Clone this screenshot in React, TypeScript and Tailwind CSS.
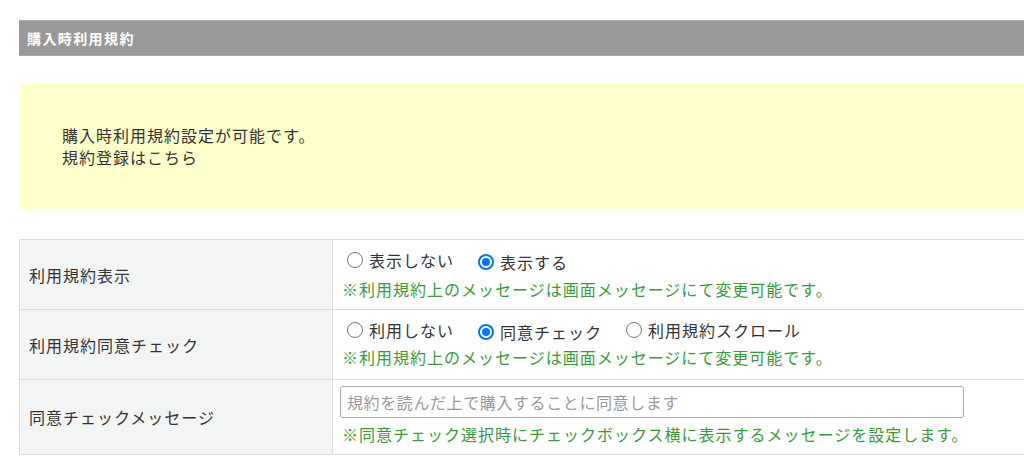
import React from 'react'

const font = { fontFamily: '"Noto Sans CJK JP", "Noto Sans", sans-serif' }

function Radio({ label, checked }: { label: string; checked?: boolean }) {
  return (
    <span className="inline-flex items-center gap-[6px]">
      {checked ? (
        <span className="flex h-[16px] w-[16px] items-center justify-center rounded-full border-2 border-[#0075ff] bg-white">
          <span className="h-[8px] w-[8px] rounded-full bg-[#0075ff]" />
        </span>
      ) : (
        <span className="h-[16px] w-[16px] rounded-full border border-[#767676] bg-white" />
      )}
      <span>{label}</span>
    </span>
  )
}

function Note({ children }: { children: React.ReactNode }) {
  return <div className="leading-[26px] text-[#3a9a3a]">{children}</div>
}

export default function App() {
  return (
    <div className="h-[473px] w-[1024px] overflow-hidden bg-white" style={font}>
      <div className="w-[1080px] pl-[19px] pt-[20px] text-[16px] tracking-[1px] text-[#333]">
        <div className="flex h-[36px] items-center border-y border-[#aaaaaa] bg-[#999999] pl-[8px] text-[14px] font-bold tracking-[1.4px] text-white">
          購入時利用規約
        </div>

        <div className="mt-[28px] h-[126px] bg-[#ffffcc] pl-[43px] pt-[40px] leading-[22px]">
          <div>購入時利用規約設定が可能です。</div>
          <div>規約登録はこちら</div>
        </div>

        <table className="mt-[29px] w-full border-collapse">
          <tbody>
            <tr className="h-[70px]">
              <th className="w-[313px] border border-[#dddddd] bg-[#f3f4f4] pl-[9px] text-left font-normal">利用規約表示</th>
              <td className="border border-[#dddddd] pl-[9px] pt-[4px] pb-[5px] align-top">
                <div className="flex h-[32px] items-center pl-[5px]">
                  <Radio label="表示しない" />
                  <span className="ml-[24px]"><Radio label="表示する" checked /></span>
                </div>
                <Note>※利用規約上のメッセージは画面メッセージにて変更可能です。</Note>
              </td>
            </tr>
            <tr className="h-[70px]">
              <th className="border border-[#dddddd] bg-[#f3f4f4] pl-[9px] text-left font-normal">利用規約同意チェック</th>
              <td className="border border-[#dddddd] pl-[9px] pt-[6px] pb-[5px] align-top">
                <div className="flex h-[28px] items-center pl-[5px]">
                  <Radio label="利用しない" />
                  <span className="ml-[24px]"><Radio label="同意チェック" checked /></span>
                  <span className="ml-[24px]"><Radio label="利用規約スクロール" /></span>
                </div>
                <Note>※利用規約上のメッセージは画面メッセージにて変更可能です。</Note>
              </td>
            </tr>
            <tr className="h-[75px]">
              <th className="border border-[#dddddd] bg-[#f3f4f4] pl-[9px] text-left font-normal">同意チェックメッセージ</th>
              <td className="border border-[#dddddd] pl-[7px] pt-[6px] pb-[4px] align-top">
                <input
                  type="text"
                  placeholder="規約を読んだ上で購入することに同意します"
                  className="h-[32px] w-[624px] rounded-[3px] border border-[#aaaaaa] px-[6px] text-[16px] tracking-[0.6px] text-[#333] placeholder:text-[#999]"
                  style={font}
                />
                <div className="mt-[3px] pl-[2px] leading-[26px] text-[#3a9a3a]">
                  ※同意チェック選択時にチェックボックス横に表示するメッセージを設定します。
                </div>
              </td>
            </tr>
          </tbody>
        </table>
      </div>
    </div>
  )
}
